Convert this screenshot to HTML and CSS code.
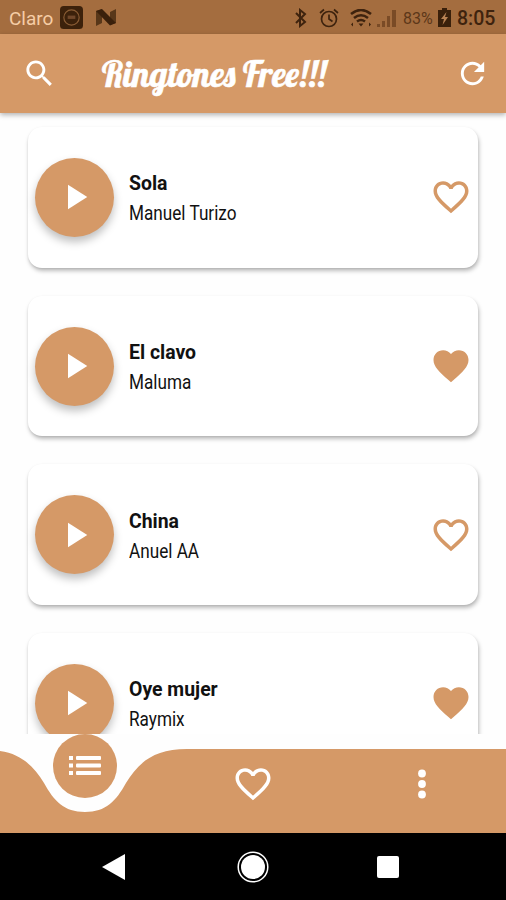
FILE: index.html
```html
<!DOCTYPE html>
<html lang="en">
<head>
<meta charset="utf-8">
<meta name="viewport" content="width=device-width">
<title>Ringtones Free!!!</title>
<link rel="stylesheet" href="styles.css">
</head>
<body>
<svg class="defs" aria-hidden="true">
  <symbol id="play" viewBox="0 0 24 24"><path d="M8 5v14l11-7z"/></symbol>
  <symbol id="heart" viewBox="0 0 24 24"><path d="M12 21.35l-1.45-1.32C5.4 15.36 2 12.28 2 8.5 2 5.42 4.42 3 7.5 3c1.74 0 3.41.81 4.5 2.09C13.09 3.81 14.76 3 16.5 3 19.58 3 22 5.42 22 8.5c0 3.78-3.4 6.86-8.55 11.54z"/></symbol>
  <symbol id="heart-line" viewBox="0 0 24 24"><path d="M16.5 3c-1.74 0-3.41.81-4.5 2.09C10.91 3.81 9.24 3 7.5 3 4.42 3 2 5.42 2 8.5c0 3.78 3.4 6.86 8.55 11.54L12 21.35l1.45-1.32C18.6 15.36 22 12.28 22 8.5 22 5.42 19.58 3 16.5 3zm-4.4 15.55l-.1.1-.1-.1C7.14 14.24 4 11.39 4 8.5 4 6.5 5.5 5 7.5 5c1.54 0 3.04.99 3.57 2.36h1.87C13.46 5.99 14.96 5 16.5 5c2 0 3.5 1.5 3.5 3.5 0 2.89-3.14 5.74-7.9 10.05z"/></symbol>
</svg>
<div class="phone">
  <div class="status">
    <span class="carrier">Claro</span>
    <svg class="app" viewBox="0 0 24 24"><rect width="24" height="24" rx="4" fill="#3c210b"/><circle cx="12" cy="12" r="8" fill="none" stroke="#8b5d35" stroke-width="1.200"/><path d="M8 10h8v3.500H8z" fill="#70472a"/></svg>
    <svg class="n" viewBox="0 0 20 17"><path d="M0 2l6-2v14l-6 3zM14 3l6-3v14l-6 2z" fill="#583719"/><path d="M0 2l6-2 14 14-6 2.500z" fill="#3a200b"/></svg>
    <svg class="bluetooth" viewBox="0 0 14 20"><path d="M2 5l9 9-5 4V2l5 4-9 9" fill="none" stroke="#3e230e" stroke-width="2"/></svg>
    <svg class="alarm" viewBox="0 0 20 20"><g fill="none" stroke="#3e230e" stroke-width="1.700"><circle cx="10" cy="11" r="7.500"/><path d="M10 6.500V11l3.500 2.500M1 5l4-3.500M19 5l-4-3.500"/></g></svg>
    <svg class="wifi" viewBox="0 0 22 18"><g fill="none" stroke="#3e230e" stroke-width="2.600"><path d="M1 5Q11-3 21 5M4 9q7-5.500 14 0M7 12.500q4-3 8 0"/></g><path d="M8.500 14.500h5L11 17.500zM1 15.500l2-2v4zM21 15.500l-2-2v4z" fill="#3e230e"/></svg>
    <svg class="signal" viewBox="0 0 19 18"><path d="M0 15h3v3H0zM5 12h3v6H5zM10 7h3v11h-3zM15 1h4v17h-4z" fill="#7a4b26"/></svg>
    <span class="percent">83%</span>
    <svg class="battery" viewBox="0 0 13 19"><path d="M4 0h5v2h4v17H0V2h4z" fill="#3a200b"/><path d="M8.500 4L3 11h3l-1.500 6L10 9H7z" fill="#b98253"/></svg>
    <span class="clock">8:05</span>
  </div>
  <header class="header">
    <svg class="search" viewBox="0 0 24 24"><path d="M15.500 14h-.79l-.28-.27C15.410 12.590 16 11.110 16 9.500 16 5.910 13.090 3 9.500 3S3 5.910 3 9.500 5.910 16 9.500 16c1.610 0 3.090-.59 4.230-1.570l.27.28v.79l5 4.990L20.490 19l-4.990-5zm-6 0C7.010 14 5 11.990 5 9.500S7.010 5 9.500 5 14 7.010 14 9.500 11.990 14 9.500 14z"/></svg>
    <svg class="title" viewBox="0 0 230 52"><text x="1" y="39" textLength="224" lengthAdjust="spacingAndGlyphs">Ringtones Free!!!</text></svg>
    <svg class="refresh" viewBox="0 0 24 24"><path d="M17.650 6.350C16.200 4.900 14.210 4 12 4c-4.420 0-7.990 3.580-7.990 8s3.570 8 7.990 8c3.730 0 6.840-2.550 7.730-6h-2.080c-.82 2.330-3.040 4-5.650 4-3.310 0-6-2.690-6-6s2.690-6 6-6c1.660 0 3.140.69 4.220 1.780L13 11h7V4l-2.350 2.350z"/></svg>
  </header>
  <main class="list">
    <article class="card">
      <div class="play"><svg><use href="#play"/></svg></div>
      <div class="info"><h2>Sola</h2><p>Manuel Turizo</p></div>
      <svg class="fav"><use href="#heart-line"/></svg>
    </article>
    <article class="card">
      <div class="play"><svg><use href="#play"/></svg></div>
      <div class="info"><h2>El clavo</h2><p>Maluma</p></div>
      <svg class="fav"><use href="#heart"/></svg>
    </article>
    <article class="card">
      <div class="play"><svg><use href="#play"/></svg></div>
      <div class="info"><h2>China</h2><p>Anuel AA</p></div>
      <svg class="fav"><use href="#heart-line"/></svg>
    </article>
    <article class="card">
      <div class="play"><svg><use href="#play"/></svg></div>
      <div class="info"><h2>Oye mujer</h2><p>Raymix</p></div>
      <svg class="fav"><use href="#heart"/></svg>
    </article>
  </main>
  <nav class="tabs">
    <svg class="wave" viewBox="0 0 506 84"><path d="M0 2C22 5 34 18 44 34C54 52 64 63 85 63S116 52 126 34C139 13 154 0 187 0H506V84H0z"/></svg>
    <div class="active"><svg viewBox="0 0 32 20"><path d="M0 0h4v4H0zM0 7.500h4v4H0zM0 15h4v4H0z"/><rect x="7" width="25" height="4" rx="1"/><rect x="7" y="7.500" width="25" height="4" rx="1"/><rect x="7" y="15" width="25" height="4" rx="1"/></svg></div>
    <div class="tab"></div>
    <div class="tab"><svg class="tab-heart"><use href="#heart-line"/></svg></div>
    <div class="tab"><svg class="dots" viewBox="0 0 8 30"><circle cx="4" cy="4.500" r="3.900"/><circle cx="4" cy="15" r="3.900"/><circle cx="4" cy="25.500" r="3.900"/></svg></div>
  </nav>
  <div class="system">
    <svg class="back" viewBox="0 0 25 28"><path d="M24 1v26L1 14z"/></svg>
    <svg class="home" viewBox="0 0 32 32"><circle cx="16" cy="16" r="14.800" fill="none" stroke="#fff" stroke-width="1.500"/><circle cx="16" cy="16" r="12"/></svg>
    <svg class="recent" viewBox="0 0 22 22"><rect width="22" height="22" rx="2"/></svg>
  </div>
</div>
</body>
</html>
```

FILE: styles.css
```css
* { box-sizing: border-box; }
body { margin: 0; background: #fff; font-family: Roboto, "Liberation Sans", sans-serif; }
svg { display: block; flex: none; }
.defs { display: none; }
.phone { width: 506px; height: 900px; display: flex; flex-direction: column; overflow: hidden; background: #fefefe; }

.status { height: 34px; flex: none; background: #a46d3f; display: flex; align-items: center; padding: 1px 0 0 9px; color: #3e230e; }
.carrier { width: 51px; padding-top: 2px; font-size: 19px; color: #f6cda6; }
.app { width: 23px; height: 23px; }
.n { width: 20px; height: 17px; margin-left: 13px; }
.bluetooth { width: 14px; height: 20px; margin-left: 178px; }
.alarm { width: 20px; height: 20px; margin-left: 11px; }
.wifi { width: 22px; height: 18px; margin-left: 11px; }
.signal { width: 19px; height: 18px; margin-left: 5px; }
.percent { width: 35px; padding-top: 1px; margin-left: 7px; font-size: 16px; color: #5c3719; }
.battery { width: 13px; height: 19px; }
.clock { padding-top: 2px; margin-left: 6px; font-size: 19.500px; font-weight: 500; }

.header { height: 79px; flex: none; background: #d59967; display: flex; align-items: center; padding-left: 22px; fill: #fff; box-shadow: 0 2px 5px rgba(0,0,0,.3); position: relative; z-index: 1; }
.search { width: 35px; height: 35px; }
.title { width: 230px; height: 52px; margin-left: 44px; overflow: visible; font: 35px "Lobster", "Liberation Serif", serif; stroke: #fff; stroke-width: .6px; }
.refresh { width: 35px; height: 35px; margin-left: 124px; }

.list { height: 621px; flex: none; overflow: hidden; padding: 14px 28px 0; display: flex; flex-direction: column; gap: 28px; }
.card { height: 140.700px; flex: none; display: flex; align-items: center; padding: 0 6.400px 0 7.400px; background: #fff; border-radius: 14px; box-shadow: 1px 3px 4px rgba(0,0,0,.26), 0 1px 2px rgba(0,0,0,.08); }
.play { width: 79px; height: 79px; flex: none; border-radius: 50%; background: #d59967; display: flex; align-items: center; justify-content: center; box-shadow: 0 5px 8px rgba(0,0,0,.25); }
.play svg { width: 42px; height: 42px; fill: #fff; }
.info { flex: 1; margin-left: 14.500px; color: #111; white-space: nowrap; }
.info h2, .info p { margin: 0; line-height: 30px; position: relative; transform-origin: left; }
.info h2 { top: 1px; font-size: 21px; font-weight: 700; transform: scaleX(.925); }
.info p { top: 2px; font-size: 19.500px; transform: scaleX(.88); }
.fav { width: 42px; height: 42px; fill: #d59967; }

.tabs { height: 84px; margin-top: 15px; flex: none; position: relative; display: flex; }
.wave { position: absolute; left: 0; top: 0; width: 506px; height: 84px; fill: #d59967; }
.active { position: absolute; left: 53px; top: -15px; width: 64px; height: 64px; border-radius: 50%; background: #d59967; display: flex; align-items: center; justify-content: center; }
.active svg { width: 32px; height: 20px; fill: #fff; }
.tab { flex: 1; position: relative; display: flex; justify-content: center; align-items: center; padding-bottom: 14px; fill: #fff; }
.tab-heart { width: 42px; height: 42px; }
.dots { width: 8px; height: 30px; }

.system { height: 67px; flex: none; background: #000; display: flex; align-items: center; padding-left: 101px; fill: #fff; }
.back { width: 25px; height: 28px; }
.home { width: 32px; height: 32px; margin-left: 111.400px; }
.recent { width: 22px; height: 22px; margin-left: 107.600px; }
```
